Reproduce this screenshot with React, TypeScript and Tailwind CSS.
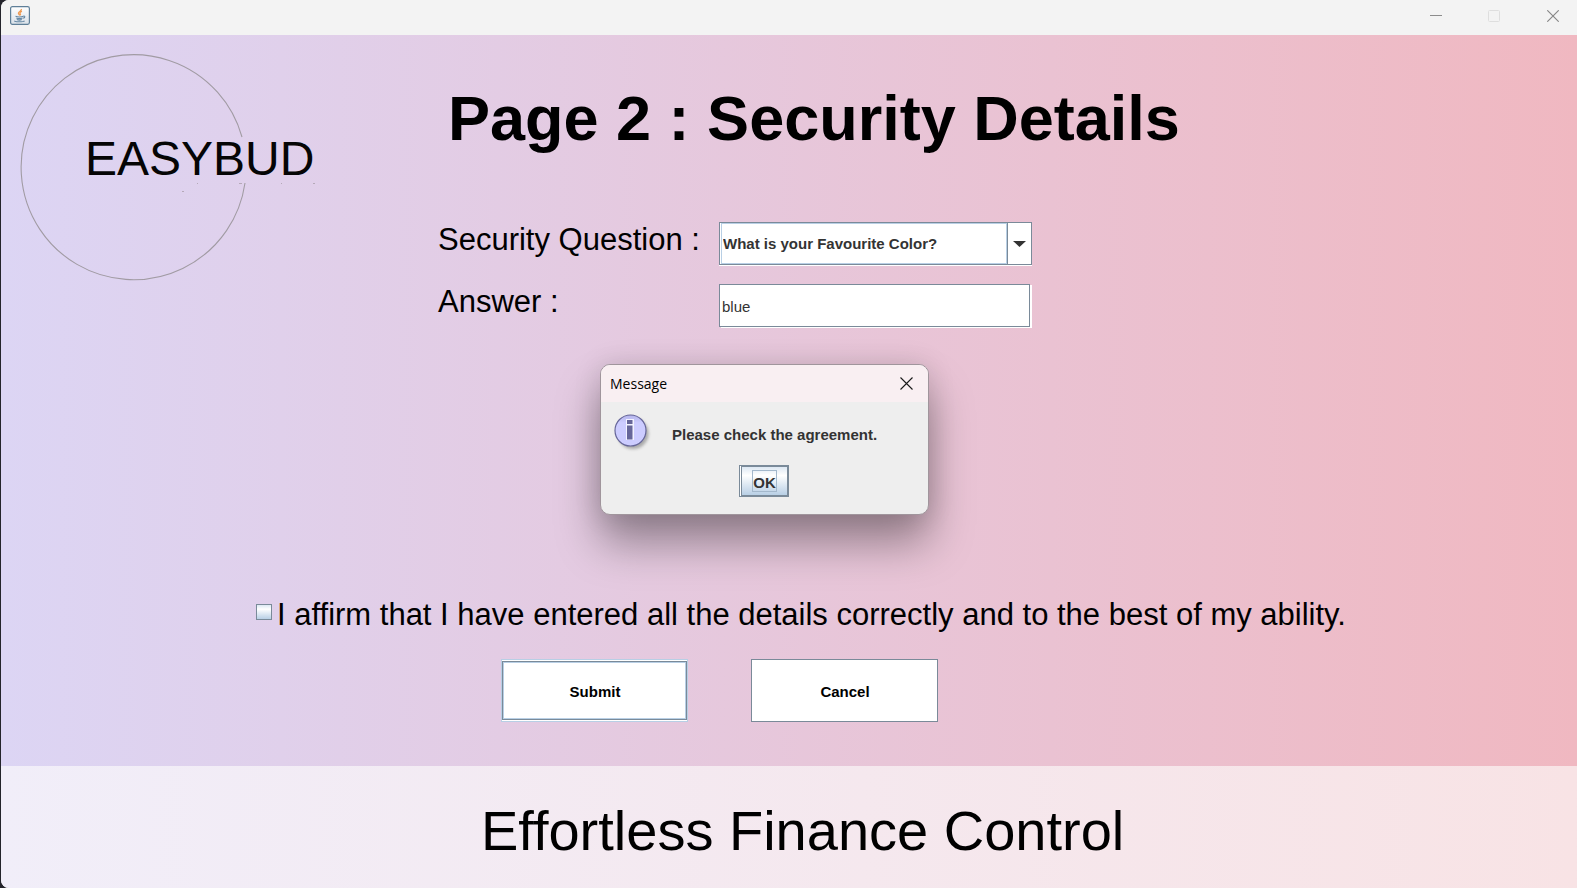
import React from "react";

function JavaIcon() {
  return (
    <svg width="20" height="19" viewBox="0 0 20 19" aria-hidden="true">
      <defs>
        <linearGradient id="java-tile" x1="0" y1="0" x2="0" y2="1">
          <stop offset="0" stopColor="#ffffff" />
          <stop offset="1" stopColor="#d8e0e8" />
        </linearGradient>
      </defs>
      <rect x="0.6" y="0.6" width="18.8" height="17.8" rx="1.8" fill="url(#java-tile)" stroke="#5f7f98" strokeWidth="1.2" />
      <path d="M11.4 3c.6 1.700-2.700 2.300-3 4 0 1 1 1.500 1.400 2.400M12 5.400c-1.500.5-2.300 1.200-1.800 2.200.5.700.400 1.200-.200 1.800" fill="none" stroke="#ee9a52" strokeWidth="1.300" />
      <path d="M5.500 10.300c2 .7 6.200.6 8 0M6.300 12c1.800.7 4.600.7 6.300 0M6.800 13.600c1.600.6 3.600.6 5 0M13.500 10c1.800-.2 1.700 1.600-.4 2.300M4.600 14.700c-1 1.400 8.600 1.500 10 .1" fill="none" stroke="#6688a4" strokeWidth="1.100" />
    </svg>
  );
}

function TitleBar() {
  return (
    <header className="flex h-[35px] shrink-0 items-start justify-between bg-[#f3f3f3]">
      <div className="pt-[6px] pl-[9px]">
        <JavaIcon />
      </div>
      <div className="flex">
        <button aria-label="Minimize" className="flex h-8 w-[58px] items-center justify-center">
          <svg width="12" height="12" viewBox="0 0 12 12">
            <path d="M0 5.500h12" stroke="#8c8c8c" />
          </svg>
        </button>
        <button aria-label="Maximize" disabled className="flex h-8 w-[58px] items-center justify-center">
          <svg width="12" height="12" viewBox="0 0 12 12">
            <rect x="0.500" y="0.500" width="11" height="11" rx="1" fill="none" stroke="#dedede" />
          </svg>
        </button>
        <button aria-label="Close" className="flex h-8 w-[54px] items-center justify-center pl-[6px]">
          <svg width="12" height="12" viewBox="0 0 12 12">
            <path d="M0.300 0.300l11.400 11.400M11.700 0.300L0.300 11.700" stroke="#858585" strokeWidth="1.100" />
          </svg>
        </button>
      </div>
    </header>
  );
}

function Logo() {
  return (
    <svg width="300" height="230" viewBox="0 0 300 230" role="img" aria-label="EASYBUD">
      <path d="M222 85A112.500 112.500 0 1 0 225 131" fill="none" stroke="#a19ba3" strokeWidth="1.100" />
      <text x="65" y="123" fontSize="48" fontFamily="'Liberation Sans', Arial, sans-serif" fill="#050505">
        EASYBUD
      </text>
      <g fill="#b5a9b8">
        <rect x="177" y="131" width="1" height="1" />
        <rect x="162" y="139" width="2" height="1" />
        <rect x="219" y="131" width="3" height="1" />
        <rect x="261" y="131" width="1" height="1" />
        <rect x="293" y="131" width="2" height="1" />
      </g>
    </svg>
  );
}

function MessageDialog() {
  return (
    <div
      role="dialog"
      aria-label="Message"
      className="absolute top-[329px] left-[599px] flex h-[151px] w-[329px] flex-col overflow-hidden rounded-[10px] border border-[#a0959c] bg-[#eeeeee] shadow-[0_28px_44px_rgba(0,0,0,0.36),0_0_28px_rgba(0,0,0,0.12)]"
    >
      <div className="flex h-[37px] shrink-0 items-center justify-between bg-[#f9eff2] pr-[15px] pl-[9px]">
        <span className="font-['Open_Sans',sans-serif] text-[14px] text-black">Message</span>
        <button aria-label="Close message">
          <svg width="13" height="13" viewBox="0 0 13 13">
            <path d="M0.500 0.500l12 12M12.500 0.500l-12 12" stroke="#1a1a1a" strokeWidth="1.100" />
          </svg>
        </button>
      </div>
      <div className="flex gap-5 pt-3 pl-[13px]">
        <svg width="38" height="40" viewBox="0 0 38 40" aria-hidden="true">
          <defs>
            <filter id="soft" x="-30%" y="-30%" width="160%" height="160%">
              <feGaussianBlur stdDeviation="1.500" />
            </filter>
            <linearGradient id="info-fill" x1="0" y1="0" x2="0" y2="1">
              <stop offset="0" stopColor="#b4b4ea" />
              <stop offset="0.250" stopColor="#ccccff" />
              <stop offset="1" stopColor="#ccccff" />
            </linearGradient>
          </defs>
          <circle cx="19" cy="19.500" r="15.500" fill="#8e8e8e" opacity="0.7" filter="url(#soft)" />
          <circle cx="16.500" cy="16.500" r="15.500" fill="url(#info-fill)" stroke="#666699" strokeWidth="1.200" />
          <path d="M12 5h8v5.500h-8zM12 10h8v16h-8z" fill="#f2f2ff" />
          <path d="M13 6h5.500v4h-5.500zM13 11.500h5.500v14h-5.500z" fill="#666699" />
        </svg>
        <p className="pt-3 text-[15px] leading-[17px] font-bold text-[#333333]">Please check the agreement.</p>
      </div>
      <div className="flex justify-center pt-[11px] pr-px">
        <button className="h-8 w-[50px] border border-r-2 border-[#7a8a99] bg-white pl-px">
          <span className="flex h-full items-center justify-center border border-r-0 border-[#7a8a99] bg-linear-to-b from-[#dde8f3] via-white via-30% to-[#b8cfe5]">
            <span className="border border-[#a3b8cc] pt-[4px] text-[15px] leading-[16px] font-bold text-[#333333]">OK</span>
          </span>
        </button>
      </div>
    </div>
  );
}

export default function App() {
  return (
    <div className="min-h-screen bg-[#24242b] pl-px font-['Liberation_Sans',Arial,sans-serif] text-black">
      <div className="flex min-h-screen flex-col overflow-hidden rounded-l-lg bg-white">
        <TitleBar />
        <main className="relative flex-1 bg-linear-to-r from-[#dcd5f4] to-[#f0b8c1]">
          <form onSubmit={(e) => e.preventDefault()}>
            <div className="flex h-[562px]">
              <div className="w-[437px] shrink-0 pt-[17px] pl-[19px]">
                <Logo />
              </div>
              <div>
                <h1 className="pt-[47px] pl-[10px] text-[63px] leading-[72px] font-bold whitespace-nowrap">
                  Page 2 : Security Details
                </h1>
                <div className="grid grid-cols-[281px_313px] gap-y-[18px] pt-[68px]">
                  <label htmlFor="question" className="text-[31px] leading-[35px]">
                    Security Question :
                  </label>
                  <div className="relative h-[44px]">
                    <select
                      id="question"
                      className="h-[43px] w-full appearance-none border border-[#7a8a99] bg-white pt-px pl-[3px] text-[15px] font-bold text-[#333333] shadow-[0_1px_0_#fff]"
                    >
                      <option>What is your Favourite Color?</option>
                    </select>
                    <span className="pointer-events-none absolute top-px right-[25px] left-[2px] h-[41px] border border-[#b8cfe5]" />
                    <span className="pointer-events-none absolute top-0 right-0 flex h-[43px] w-[25px] items-center justify-center border border-[#7a8a99]">
                      <svg width="13" height="6" viewBox="0 0 13 6">
                        <path d="M0 0h13L6.500 6z" fill="#333333" />
                      </svg>
                    </span>
                  </div>
                  <label htmlFor="answer" className="text-[31px] leading-[35px]">
                    Answer :
                  </label>
                  <input
                    id="answer"
                    type="text"
                    defaultValue="blue"
                    className="h-[43px] w-[311px] border border-[#7a8a99] bg-white pt-px pl-[2px] text-[15px] text-[#333333] shadow-[2px_1px_0_#fff] outline-none"
                  />
                </div>
              </div>
            </div>
            <div className="flex h-[31px] items-start gap-[5px] pl-[255px]">
              <input
                id="affirm"
                type="checkbox"
                className="mt-[7px] size-4 shrink-0 appearance-none border border-[#7a8a99] bg-linear-to-b from-[#dde8f3] via-white via-30% to-[#b8cfe5]"
              />
              <label htmlFor="affirm" className="text-[31px] leading-[35px] whitespace-nowrap">
                I affirm that I have entered all the details correctly and to the best of my ability.
              </label>
            </div>
            <div className="flex gap-[63px] pt-[31px] pb-[44px] pl-[500px] text-[15px] font-bold">
              <button type="submit" className="h-[63px] w-[187px] border border-[#b8cfe5] bg-white py-px">
                <span className="flex h-full items-center justify-center border border-[#7a8a99] pt-[3px] pl-px shadow-[inset_0_0_0_1px_#b8cfe5]">
                  Submit
                </span>
              </button>
              <button type="button" className="h-[63px] w-[187px] border border-[#7a8a99] bg-white pt-[3px] pl-px">
                Cancel
              </button>
            </div>
          </form>
          <MessageDialog />
        </main>
        <footer className="flex h-[122px] shrink-0 items-center bg-linear-to-r from-[#f1eef9] to-[#f8e3e5] pl-[480px]">
          <p className="pt-[8px] text-[56px] leading-[64px] whitespace-nowrap">Effortless Finance Control</p>
        </footer>
      </div>
    </div>
  );
}
